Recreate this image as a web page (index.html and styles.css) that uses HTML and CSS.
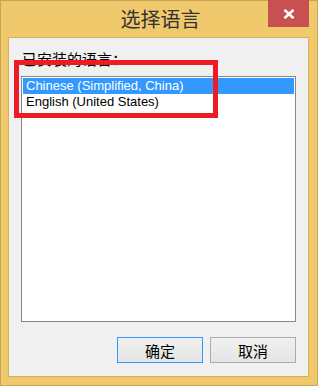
FILE: index.html
```html
<!DOCTYPE html>
<html lang="zh-CN">
<head>
    <meta charset="UTF-8">
    <meta name="viewport" content="width=device-width, initial-scale=1.0">
    <title>选择语言</title>
    <link rel="stylesheet" href="styles.css">
</head>
<body>
    <div class="window">
        <div class="titlebar">
            <div class="title">选择语言</div>
            <div class="close">
                <svg width="12" height="10" viewBox="0 0 12 10">
                    <path d="M1.5 0.8 L10.5 9.2 M10.5 0.8 L1.5 9.2" stroke="#ffffff" stroke-width="2.6" fill="none"/>
                </svg>
            </div>
        </div>
        <div class="client">
            <div class="label">已安装的语言：</div>
            <div class="listbox">
                <div class="item selected">Chinese (Simplified, China)</div>
                <div class="item">English (United States)</div>
            </div>
            <div class="buttons">
                <button class="btn default">确定</button>
                <button class="btn">取消</button>
            </div>
            <!-- annotation box drawn over the list -->
            <div class="highlight"></div>
        </div>
    </div>
</body>
</html>
```

FILE: styles.css
```css
body {
    margin: 0;
    font-family: "Noto Sans CJK SC", sans-serif;
}
.window {
    width: 318px;
    height: 386px;
    box-sizing: border-box;
    background-color: #f0c96c; /* win8 yellow frame */
    border: 1px solid #c9a55a;
    padding: 0 8px 8px 7px;
    display: flex;
    flex-direction: column;
}
.titlebar {
    height: 36px;
    display: flex;
    align-items: center;
    justify-content: center;
    position: relative;
}
.title {
    font-size: 20px;
    color: #333333;
    margin-left: 4px;
    line-height: 20px;
    margin-top: -1px;
}
.close {
    position: absolute;
    top: -1px;
    right: 0;
    width: 41px;
    height: 27px;
    background-color: #c75050;
    display: flex;
    align-items: center;
    justify-content: center;
}
.client {
    flex: 1;
    background-color: #f0f0f0;
    border: 1px solid #d7af5c;
    padding: 0 12px;
    display: flex;
    flex-direction: column;
    position: relative;
}
.label {
    font-size: 15px;
    line-height: 20px;
    color: #000000;
    margin-top: 11px;
    margin-left: 1px;
}
.listbox {
    margin-top: 7px;
    height: 242px;
    background-color: #ffffff;
    border: 1px solid #828790;
    padding: 1px;
}
.item {
    height: 16px;
    line-height: 16px;
    padding-left: 3px;
    font-family: "Liberation Sans", Arial, sans-serif;
    font-size: 13px;
    color: #000000;
}
.item.selected {
    background-color: #3399ff;
    color: #ffffff;
}
.buttons {
    margin-top: 15px;
    display: flex;
    justify-content: flex-end;
    gap: 7px;
}
.btn {
    width: 86px;
    height: 26px;
    font-family: "Noto Sans CJK SC", sans-serif;
    font-size: 15px;
    color: #000000;
    background: linear-gradient(#f0f0f0, #e5e5e5);
    border: 1px solid #acacac;
    padding: 0;
}
.btn.default {
    border-color: #3399ff;
}
.highlight {
    position: absolute;
    left: 5px;
    top: 22px;
    width: 194px;
    height: 48px;
    border: 5px solid #ed1c24;
}
```
